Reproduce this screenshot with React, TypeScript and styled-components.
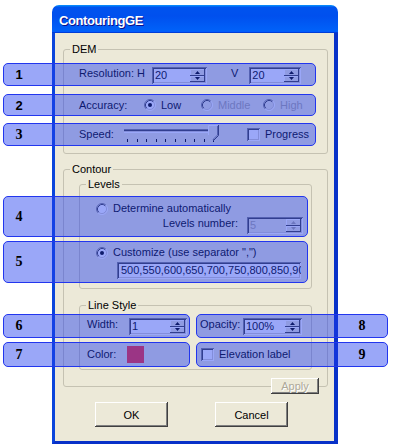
import React from "react";
import styled, { createGlobalStyle } from "styled-components";

const GlobalStyle = createGlobalStyle`
  html, body { margin: 0; padding: 0; background: #fff; }
  body {
    font-family: "Liberation Sans", Arial, sans-serif;
    font-size: 11px;
    color: #000;
  }
`;

const CREAM = "#ece9d8";
const DISABLED = "#aca899";

const Page = styled.div`
  position: relative;
  width: 393px;
  height: 448px;
  overflow: hidden;
  background: #fff;
`;

const Window = styled.div`
  margin: 5px 0 0 52px;
  width: 286px;
  height: 439px;
  display: flex;
  flex-direction: column;
`;

const TitleBar = styled.div`
  flex: none;
  height: 28px;
  box-sizing: border-box;
  padding: 3px 0 0 7px;
  display: flex;
  align-items: center;
  border-radius: 7px 7px 0 0;
  background: linear-gradient(
    180deg,
    #0997ff,
    #0053ee 8%,
    #0050ee 40%,
    #0060f8 88%,
    #0060f8 93%,
    #005bff 95%,
    #003dd7 96%,
    #003dd7
  );
  color: #fff;
  font-weight: bold;
  font-size: 13px;
  letter-spacing: -0.4px;
  text-shadow: 1px 1px #0f1089;
`;

const Body = styled.div`
  flex: 1;
  background: ${CREAM};
  border-left: 3px solid #0a45dc;
  border-right: 4px solid #0831c8;
  border-bottom: 3px solid #0831c8;
  padding: 16px 6px 0 8px;
  display: flex;
  flex-direction: column;
`;

const Group = styled.div<{ $mt: number }>`
  margin-top: ${(p) => p.$mt}px;
  border: 1px solid #c5c2b2;
  border-radius: 3px;
  display: flex;
  flex-direction: column;
`;

const Legend = styled.span`
  align-self: flex-start;
  margin: -7px 0 0 6px;
  padding: 0 2px;
  height: 13px;
  line-height: 13px;
  background: ${CREAM};
`;

const GroupBody = styled.div<{ $pl: number; $pr?: number; $pb: number }>`
  display: flex;
  flex-direction: column;
  padding: 0 ${(p) => p.$pr ?? 0}px ${(p) => p.$pb}px ${(p) => p.$pl}px;
`;

const Row = styled.div<{ $mt: number; $h: number; $top?: boolean; $end?: boolean }>`
  display: flex;
  align-items: ${(p) => (p.$top ? "flex-start" : "center")};
  justify-content: ${(p) => (p.$end ? "flex-end" : "flex-start")};
  height: ${(p) => p.$h}px;
  margin-top: ${(p) => p.$mt}px;
`;

const Cells = styled.div<{ $mt: number }>`
  display: grid;
  grid-template-columns: 113px 1fr;
  height: 17px;
  margin-top: ${(p) => p.$mt}px;
`;

const Cell = styled.div<{ $top?: boolean }>`
  display: flex;
  align-items: ${(p) => (p.$top ? "flex-start" : "center")};
`;

const Label = styled.span<{ $w?: number; $ml?: number; $disabled?: boolean }>`
  flex: none;
  ${(p) => (p.$w ? `width: ${p.$w}px;` : "")}
  margin-left: ${(p) => p.$ml ?? 0}px;
  line-height: 13px;
  white-space: nowrap;
  color: ${(p) => (p.$disabled ? DISABLED : "#000")};
`;

const SpinFrame = styled.div<{ $w: number; $ml?: number; $disabled?: boolean }>`
  flex: none;
  width: ${(p) => p.$w}px;
  height: 17px;
  margin-left: ${(p) => p.$ml ?? 0}px;
  box-sizing: border-box;
  padding: 2px;
  display: flex;
  background: ${(p) => (p.$disabled ? CREAM : "#fff")};
  box-shadow: inset 1px 1px #808080, inset -1px -1px #fff, inset 2px 2px #404040,
    inset -2px -2px #d4d0c8;
`;

const SpinText = styled.span<{ $disabled?: boolean }>`
  flex: 1;
  padding-left: 1px;
  line-height: 13px;
  color: ${(p) => (p.$disabled ? DISABLED : "#000")};
`;

const SpinButtons = styled.div`
  width: 15px;
  display: flex;
  flex-direction: column;
`;

const SpinButton = styled.div`
  flex: 1;
  display: flex;
  align-items: center;
  justify-content: center;
  background: ${CREAM};
  box-shadow: inset -1px -1px #404040, inset 1px 1px #fff;
`;

const TextField = styled.div`
  margin: 3px 0 0 21px;
  width: 184px;
  height: 17px;
  box-sizing: border-box;
  padding: 2px 2px 2px 4px;
  background: #fff;
  line-height: 13px;
  white-space: nowrap;
  overflow: hidden;
  box-shadow: inset 1px 1px #808080, inset -1px -1px #fff, inset 2px 2px #404040,
    inset -2px -2px #d4d0c8;
`;

const Option = styled.div<{ $w?: number; $disabled?: boolean }>`
  flex: none;
  ${(p) => (p.$w ? `width: ${p.$w}px;` : "")}
  display: flex;
  align-items: center;
  gap: 5px;
  color: ${(p) => (p.$disabled ? DISABLED : "#000")};
  line-height: 13px;
  white-space: nowrap;
`;

const CheckBox = styled.span<{ $ml?: number }>`
  flex: none;
  width: 13px;
  height: 13px;
  margin-left: ${(p) => p.$ml ?? 0}px;
  background: #fff;
  box-shadow: inset 1px 1px #808080, inset -1px -1px #fff, inset 2px 2px #404040,
    inset -2px -2px #d4d0c8;
`;

const Swatch = styled.span<{ $color: string }>`
  position: relative;
  z-index: 3;
  width: 17px;
  height: 17px;
  background: ${(p) => p.$color};
`;

const PushButton = styled.div<{ $w: number; $h: number; $disabled?: boolean }>`
  width: ${(p) => p.$w}px;
  height: ${(p) => p.$h}px;
  display: flex;
  align-items: center;
  justify-content: center;
  background: ${CREAM};
  color: ${(p) => (p.$disabled ? DISABLED : "#000")};
  text-shadow: ${(p) => (p.$disabled ? "1px 1px #fff" : "none")};
  box-shadow: inset -1px -1px #404040, inset 1px 1px #fff, inset -2px -2px #808080;
`;

const ApplyRow = styled.div`
  display: flex;
  justify-content: flex-end;
  margin: 8px -7px -8px 0;
`;

const ButtonRow = styled.div`
  display: flex;
  gap: 47px;
  margin-top: 15px;
  padding-left: 32px;
`;

const Callout = styled.div<{ $right?: boolean }>`
  position: absolute;
  z-index: 2;
  box-sizing: border-box;
  border: 1px solid #2236ee;
  border-radius: 5px;
  background: rgba(30, 60, 240, 0.45);
  display: flex;
  align-items: center;
  justify-content: ${(p) => (p.$right ? "flex-end" : "flex-start")};
`;

const CalloutNum = styled.span<{ $serif?: boolean; $right?: boolean }>`
  width: 30px;
  margin-right: ${(p) => (p.$right ? 10 : 0)}px;
  text-align: center;
  font-weight: bold;
  font-family: ${(p) =>
    p.$serif ? `"Liberation Serif", "Times New Roman", serif` : `"Liberation Sans", Arial, sans-serif`};
  font-size: ${(p) => (p.$serif ? 14 : 13)}px;
  color: #000;
`;

function Radio({ checked, disabled }: { checked?: boolean; disabled?: boolean }) {
  return (
    <svg width="12" height="12" viewBox="0 0 12 12" style={{ flex: "none" }}>
      <circle cx="6" cy="6" r="4.5" fill={disabled ? CREAM : "#fff"} />
      <path d="M2.11 9.89 A5.5 5.5 0 0 1 9.89 2.11" fill="none" stroke="#808080" />
      <path d="M9.89 2.11 A5.5 5.5 0 0 1 2.11 9.89" fill="none" stroke="#fff" />
      <path d="M2.82 9.18 A4.5 4.5 0 0 1 9.18 2.82" fill="none" stroke="#404040" />
      <path d="M9.18 2.82 A4.5 4.5 0 0 1 2.82 9.18" fill="none" stroke="#d4d0c8" />
      {checked && <circle cx="6" cy="6" r="2" fill="#000" />}
    </svg>
  );
}

function Arrow({ down, disabled }: { down?: boolean; disabled?: boolean }) {
  return (
    <svg width="5" height="3" viewBox="0 0 5 3">
      <path d={down ? "M0 0 H5 L2.5 3Z" : "M2.5 0 L5 3 H0Z"} fill={disabled ? DISABLED : "#000"} />
    </svg>
  );
}

function Spin({ value, w, ml, disabled }: { value: string; w: number; ml?: number; disabled?: boolean }) {
  return (
    <SpinFrame $w={w} $ml={ml} $disabled={disabled}>
      <SpinText $disabled={disabled}>{value}</SpinText>
      <SpinButtons>
        <SpinButton>
          <Arrow disabled={disabled} />
        </SpinButton>
        <SpinButton>
          <Arrow down disabled={disabled} />
        </SpinButton>
      </SpinButtons>
    </SpinFrame>
  );
}

function Slider() {
  const ticks = Array.from({ length: 10 }, (_, i) => 5 + i * 9.6);
  return (
    <svg width="98" height="20" viewBox="0 0 98 20" style={{ flex: "none" }}>
      <rect x="2" y="5" width="94" height="1" fill="#808080" />
      <rect x="2" y="6" width="94" height="1" fill="#404040" />
      <rect x="2" y="7" width="94" height="1" fill="#d4d0c8" />
      <rect x="2" y="8" width="94" height="1" fill="#fff" />
      {ticks.map((x) => (
        <rect key={x} x={Math.round(x)} y="15" width="1" height="3" fill="#000" />
      ))}
      <polygon points="86,1 96,1 96,11 91,16 86,11" fill={CREAM} />
      <path d="M86.5 11 V1.5 H95.5" fill="none" stroke="#fff" />
      <path d="M96.5 1 V11.5 L91 17" fill="none" stroke="#404040" />
      <path d="M95.5 2 V11 L91 15.5" fill="none" stroke="#808080" />
    </svg>
  );
}

const callouts = [
  { n: "1", x: 3, y: 63, w: 313, h: 23 },
  { n: "2", x: 3, y: 94, w: 313, h: 22 },
  { n: "3", x: 3, y: 123, w: 313, h: 23, serif: true },
  { n: "4", x: 3, y: 196, w: 305, h: 41, serif: true },
  { n: "5", x: 3, y: 241, w: 305, h: 42, serif: true },
  { n: "6", x: 3, y: 314, w: 187, h: 24, serif: true },
  { n: "7", x: 3, y: 342, w: 187, h: 25, serif: true },
  { n: "8", x: 196, y: 314, w: 192, h: 24, serif: true, right: true },
  { n: "9", x: 196, y: 342, w: 192, h: 25, serif: true, right: true },
];

export default function App() {
  return (
    <Page>
      <GlobalStyle />
      <Window>
        <TitleBar>ContouringGE</TitleBar>
        <Body>
          <Group $mt={0}>
            <Legend>DEM</Legend>
            <GroupBody $pl={15} $pb={9}>
              <Row $mt={11} $h={17} $top>
                <Label $w={73}>Resolution: H</Label>
                <Spin value="20" w={55} />
                <Label $ml={24}>V</Label>
                <Spin value="20" w={52} ml={11} />
              </Row>
              <Row $mt={13} $h={16}>
                <Label $w={65}>Accuracy:</Label>
                <Option $w={57}>
                  <Radio checked />
                  Low
                </Option>
                <Option $w={62} $disabled>
                  <Radio disabled />
                  Middle
                </Option>
                <Option $disabled>
                  <Radio disabled />
                  High
                </Option>
              </Row>
              <Row $mt={11} $h={20}>
                <Label $w={43}>Speed:</Label>
                <Slider />
                <Option style={{ marginLeft: 27 }}>
                  <CheckBox />
                  Progress
                </Option>
              </Row>
            </GroupBody>
          </Group>

          <Group $mt={15}>
            <Legend>Contour</Legend>
            <GroupBody $pl={15} $pr={15} $pb={0}>
              <Group $mt={8}>
                <Legend>Levels</Legend>
                <GroupBody $pl={16} $pr={8} $pb={9}>
                  <Row $mt={11} $h={13}>
                    <Option>
                      <Radio />
                      Determine automatically
                    </Option>
                  </Row>
                  <Row $mt={2} $h={17} $top $end>
                    <Label $disabled={false}>Levels number:</Label>
                    <Spin value="5" w={56} ml={9} disabled />
                  </Row>
                  <Row $mt={12} $h={13}>
                    <Option>
                      <Radio checked />
                      Customize (use separator ",")
                    </Option>
                  </Row>
                  <TextField>500,550,600,650,700,750,800,850,900,950,1000</TextField>
                </GroupBody>
              </Group>

              <Group $mt={16}>
                <Legend>Line Style</Legend>
                <GroupBody $pl={7} $pb={6}>
                  <Cells $mt={6}>
                    <Cell $top>
                      <Label $w={42}>Width:</Label>
                      <Spin value="1" w={58} />
                    </Cell>
                    <Cell $top>
                      <Label $w={43}>Opacity:</Label>
                      <Spin value="100%" w={59} />
                    </Cell>
                  </Cells>
                  <Cells $mt={11}>
                    <Cell>
                      <Label $w={40}>Color:</Label>
                      <Swatch $color="#9b3585" />
                    </Cell>
                    <Cell>
                      <Option>
                        <CheckBox $ml={1} />
                        Elevation label
                      </Option>
                    </Cell>
                  </Cells>
                </GroupBody>
              </Group>

              <ApplyRow>
                <PushButton $w={48} $h={16} $disabled>
                  Apply
                </PushButton>
              </ApplyRow>
            </GroupBody>
          </Group>

          <ButtonRow>
            <PushButton $w={73} $h={25}>
              OK
            </PushButton>
            <PushButton $w={73} $h={25}>
              Cancel
            </PushButton>
          </ButtonRow>
        </Body>
      </Window>

      {callouts.map((c) => (
        <Callout
          key={c.n}
          $right={c.right}
          style={{ left: c.x, top: c.y, width: c.w, height: c.h }}
        >
          <CalloutNum $serif={c.serif} $right={c.right}>
            {c.n}
          </CalloutNum>
        </Callout>
      ))}
    </Page>
  );
}
